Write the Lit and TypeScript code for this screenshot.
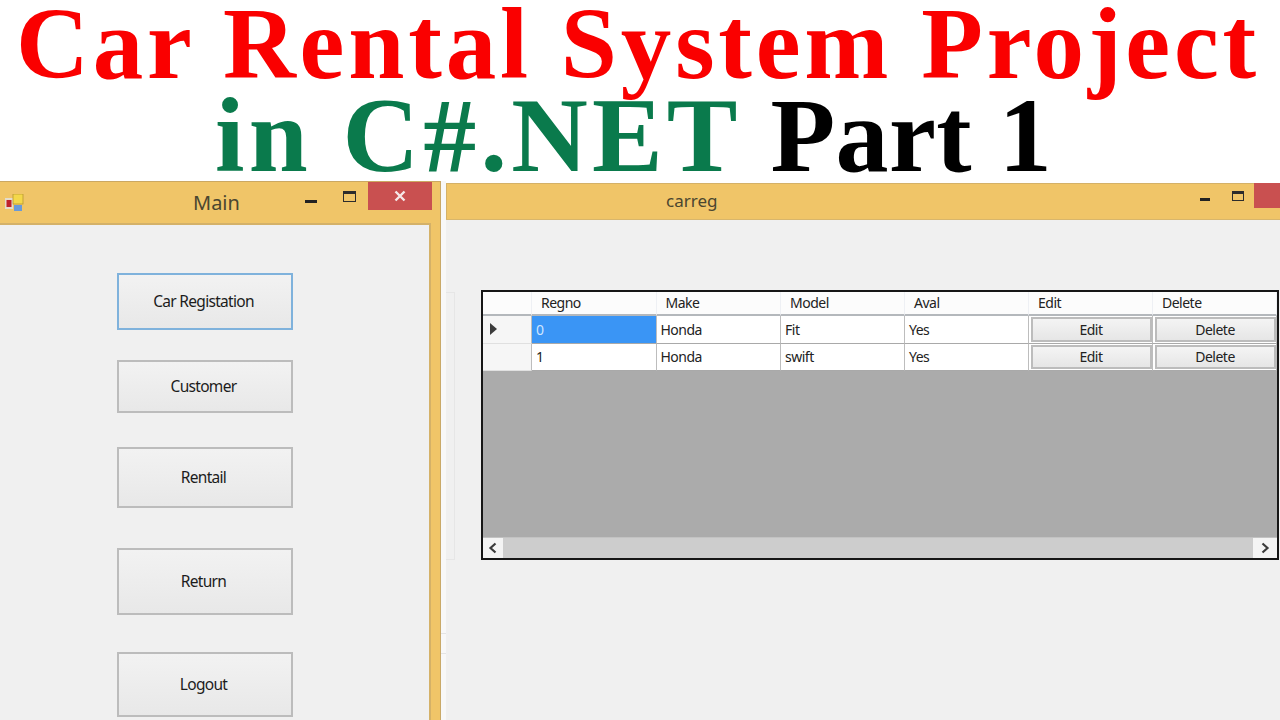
import { LitElement, html, css } from "lit";
import { customElement } from "lit/decorators.js";

const rows = [
  ["0", "Honda", "Fit", "Yes"],
  ["1", "Honda", "swift", "Yes"],
];

@customElement("app-root")
export class AppRoot extends LitElement {
  static styles = css`
    :host { display: block; width: 1280px; height: 720px; overflow: hidden; background: #fff; font-family: "Noto Sans", "Open Sans", sans-serif; color: #222; }
    .title { height: 181px; display: flex; flex-direction: column; align-items: center; font-family: "Liberation Serif", serif; font-weight: 700; white-space: nowrap; }
    .l1 { color: #fa0000; font-size: 101px; line-height: 90px; letter-spacing: 3.8px; margin-top: -1px; padding-right: 4px; }
    .l2 { color: #0a7a4c; font-size: 106px; line-height: 90px; letter-spacing: 4.2px; margin-top: 2px; padding-right: 13px; }
    .l2 b { color: #000; letter-spacing: 0.3px; }
    .desk { position: relative; height: 539px; overflow: hidden; }
    .win { position: absolute; background: #f0c568; }
    .main { left: 0; top: 0; width: 441px; height: 539px; border-right: 1px solid #c9a968; border-top: 1px solid #cba862; box-sizing: border-box; }
    .carreg { left: 446px; top: 2px; width: 834px; height: 537px; }
    .tb { position: relative; font-size: 20px; color: #4a4630; }
    .main .tb { height: 42px; }
    .carreg .tb { height: 36px; border-bottom: 1px solid #d8b66c; font-size: 17px; box-shadow: inset 1px 1px 0 #d4b168; }
    .ttl { position: absolute; }
    .main .ttl { left: 193px; top: 9px; line-height: 24px; }
    .carreg .ttl { left: 220px; top: 6px; line-height: 24px; }
    .app { position: absolute; left: 5px; top: 12px; }
    .min { position: absolute; width: 12px; height: 3px; background: #222; }
    .max { position: absolute; box-sizing: border-box; border: 1.5px solid #2c2c2c; border-top-width: 3px; }
    .cls { position: absolute; background: #c95050; color: #fff; display: flex; align-items: center; justify-content: center; }
    .main .min { left: 305px; top: 18px; }
    .main .max { left: 343px; top: 9px; width: 13px; height: 11px; }
    .main .cls { left: 368px; top: 0; width: 64px; height: 28px; }
    .carreg .min { left: 754px; top: 15px; width: 10px; }
    .carreg .max { left: 786px; top: 8px; width: 12px; height: 10px; }
    .carreg .cls { left: 808px; top: 0; width: 64px; height: 25px; }
    .client { background: #f0f0f0; }
    .main .client { position: relative; width: 431px; height: 500px; box-sizing: border-box; border-top: 2px solid #d4b168; border-right: 2px solid #d4b168; margin-top: -1px; }
    .carreg .client { position: relative; height: 500px; }
    .mb { position: absolute; left: 117px; width: 176px; box-sizing: border-box; border: 2px solid #bcbcbc; background: linear-gradient(#f2f2f2, #e8e8e8); display: flex; align-items: center; justify-content: center; font-size: 15.5px; letter-spacing: -0.7px; color: #1c1c1c; padding: 0 3px 1px 0; }
    .mb.focus { border-color: #7fb2dc; }
    .ghost { position: absolute; left: 446px; top: 111px; width: 9px; height: 268px; box-sizing: border-box; border: 1px solid #e6e6e6; border-left: none; background: #f0f0f0; }
    .gap { position: absolute; left: 441px; top: 0; width: 5px; height: 539px; background: #f8f8f8; }
    .tick { position: absolute; left: 441px; width: 5px; height: 1px; background: #e4e4e4; }
    .grid { position: absolute; left: 35px; top: 70px; width: 798px; height: 270px; box-sizing: border-box; border: 2px solid #161616; background: #ababab; display: flex; flex-direction: column; font-size: 14px; letter-spacing: -0.5px; color: #222; overflow: hidden; }
    .gr { display: grid; grid-template-columns: 49px 124.5px 124.5px 124px 124px 124px 124px; flex: none; }
    .gr.head { height: 24px; background: #fcfcfc; }
    .gr.body { height: 27.5px; background: #fff; }
    .c { box-sizing: border-box; display: flex; align-items: center; border-right: 1px solid #bdbdbd; border-bottom: 1px solid #a9a9a9; padding-left: 4px; overflow: hidden; white-space: nowrap; }
    .head .c { padding-left: 9px; border-right-color: #eef0f4; border-bottom: 2px solid #b4b8bc; padding-bottom: 1px; }
    .rh { background: #f6f6f6; padding-left: 7px; border-bottom-color: #e0e0e0; }
    .sel { background: #3a95f5; color: #cfe6ff; }
    .c.btnc { padding: 1px 0 1px 2px; }
    .gb { flex: 1; height: 100%; box-sizing: border-box; border: 2px solid #bcbcbc; background: linear-gradient(#f4f4f4, #e6e6e6); display: flex; align-items: center; justify-content: center; padding-right: 1px; }
    .spacer { flex: 1; }
    .sb { height: 21px; flex: none; background: #f4f4f4; display: flex; align-items: center; border-top: 1px solid #c2c2c2; box-sizing: border-box; }
    .sb .thumb { flex: 1; height: 100%; background: #cdcdcd; }
    .arrow { width: 20px; height: 100%; display: flex; align-items: center; justify-content: center; flex: none; }
    .arrow.r { width: 24px; }
  `;

  private cell(r: string[], i: number) {
    return html`<div class="gr body">
      <div class="c rh">${i === 0
        ? html`<svg width="8" height="12" viewBox="0 0 8 12"><path d="M0 0L7 6L0 12Z" fill="#3c3c3c"/></svg>`
        : ""}</div>
      <div class="c ${i === 0 ? "sel" : ""}">${r[0]}</div>
      <div class="c">${r[1]}</div>
      <div class="c">${r[2]}</div>
      <div class="c">${r[3]}</div>
      <div class="c btnc"><div class="gb">Edit</div></div>
      <div class="c btnc"><div class="gb">Delete</div></div>
    </div>`;
  }

  render() {
    const x = html`<svg width="12" height="12" viewBox="0 0 12 12"><path d="M1.5 1.5L10.5 10.5M10.5 1.5L1.5 10.5" stroke="#f6e8e8" stroke-width="2.4"/></svg>`;
    const btns = [
      ["Car Registation", 92, 57, "focus"],
      ["Customer", 179, 53, ""],
      ["Rentail", 266, 61, ""],
      ["Return", 367, 67, ""],
      ["Logout", 471, 65, ""],
    ] as const;
    return html`
      <div class="title">
        <div class="l1">Car Rental System Project</div>
        <div class="l2">in C#.NET <b>Part 1</b></div>
      </div>
      <div class="desk">
        <div class="gap"></div>
        <div class="tick" style="top:452px"></div>
        <div class="tick" style="top:472px"></div>
        <div class="win main">
          <div class="tb">
            <svg class="app" width="19" height="18" viewBox="0 0 19 18">
              <rect x="0" y="4" width="8" height="11" fill="#e4dccb"/>
              <rect x="1.5" y="6" width="5" height="7" fill="#c0222a"/>
              <rect x="8" y="0" width="10" height="10" fill="#f4d84a" stroke="#b89a30" stroke-width="0.8"/>
              <rect x="9" y="11" width="8" height="6" fill="#6a9ad8"/>
            </svg>
            <span class="ttl">Main</span>
            <div class="min"></div>
            <div class="max"></div>
            <div class="cls">${x}</div>
          </div>
          <div class="client">
            ${btns.map(
              ([t, top, h, k]) =>
                html`<div class="mb ${k}" style="top:${top - 44}px;height:${h}px">${t}</div>`
            )}
          </div>
        </div>
        <div class="win carreg">
          <div class="tb">
            <span class="ttl">carreg</span>
            <div class="min"></div>
            <div class="max"></div>
            <div class="cls">${x}</div>
          </div>
          <div class="client">
            <div class="grid">
              <div class="gr head">
                <div class="c"></div>
                <div class="c">Regno</div>
                <div class="c">Make</div>
                <div class="c">Model</div>
                <div class="c">Aval</div>
                <div class="c">Edit</div>
                <div class="c">Delete</div>
              </div>
              ${rows.map((r, i) => this.cell(r, i))}
              <div class="spacer"></div>
              <div class="sb">
                <div class="arrow"><svg width="10" height="12" viewBox="0 0 10 12"><path d="M7.5 1.5L2.5 6L7.5 10.5" fill="none" stroke="#3c3c3c" stroke-width="2.2"/></svg></div>
                <div class="thumb"></div>
                <div class="arrow r"><svg width="10" height="12" viewBox="0 0 10 12"><path d="M2.5 1.5L7.5 6L2.5 10.5" fill="none" stroke="#3c3c3c" stroke-width="2.2"/></svg></div>
              </div>
            </div>
          </div>
        </div>
        <div class="ghost"></div>
      </div>
    `;
  }
}
